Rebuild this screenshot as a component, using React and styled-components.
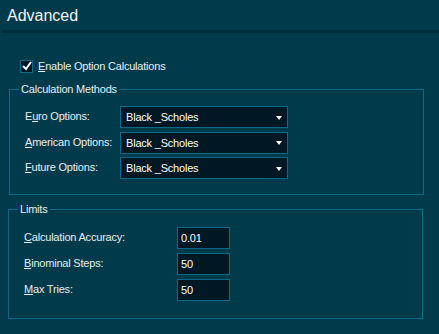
import React from "react";
import styled, { createGlobalStyle } from "styled-components";

const GlobalStyle = createGlobalStyle`
  html, body {
    margin: 0;
    padding: 0;
    background: #003a4b;
  }
  body {
    font-family: "Liberation Sans", Arial, sans-serif;
    font-size: 11px;
    letter-spacing: -0.2px;
    color: #e6f0f2;
  }
`;

const Page = styled.div`
  width: 439px;
  height: 334px;
  background: #003a4b;
  overflow: hidden;
`;

const Header = styled.div`
  margin-left: 2px;
  height: 30px;
  border-bottom: 3px solid #002e3c;
  box-sizing: content-box;
  display: flex;
  align-items: center;
  padding-left: 5px;
`;

const Title = styled.div`
  font-size: 16px;
  line-height: 18px;
  letter-spacing: 0;
  color: #f2f6f7;
  margin-top: 1px;
`;

const CheckRow = styled.label`
  display: flex;
  align-items: center;
  gap: 5px;
  margin: 27px 0 0 20px;
  height: 12px;
  line-height: 13px;
`;

const Box = styled.span`
  width: 11px;
  height: 11px;
  border: 1px solid #0a6a88;
  background: #001823;
  display: flex;
  align-items: center;
  justify-content: center;
`;

const Fieldset = styled.fieldset`
  margin: ${(p) => p.$top}px 0 0 ${(p) => p.$left}px;
  width: 415px;
  box-sizing: border-box;
  border: 1px solid #0a6a88;
  padding: ${(p) => p.$pt}px 14px ${(p) => p.$bottom}px 14px;
  min-width: 0;
`;

const Legend = styled.legend`
  padding: 0 2px;
  margin-left: -5px;
  line-height: 13px;
  color: #e6f0f2;
`;

const Grid = styled.div`
  display: grid;
  grid-template-columns: ${(p) => p.$label}px ${(p) => p.$field}px;
  row-gap: ${(p) => p.$gap}px;
  align-items: center;
`;

const Label = styled.span`
  padding-left: 1px;
  line-height: 13px;
  margin-top: -1px;
`;

const Select = styled.div`
  height: 22px;
  box-sizing: border-box;
  border: 1px solid #0a6a88;
  background: #001823;
  color: #ffffff;
  display: flex;
  align-items: center;
  justify-content: space-between;
  padding: 0 5px 0 5px;
`;

const Arrow = styled.span`
  width: 0;
  height: 0;
  border-left: 3.5px solid transparent;
  border-right: 3.5px solid transparent;
  border-top: 4px solid #ffffff;
  margin-top: 1px;
`;

const Input = styled.div`
  height: 22px;
  box-sizing: border-box;
  border: 1px solid #0a6a88;
  background: #001823;
  color: #ffffff;
  display: flex;
  align-items: center;
  padding: 0 3px;
`;

const U = styled.span`
  text-decoration: underline;
`;

const methods = [
  { pre: "E", key: "u", post: "ro Options:" },
  { pre: "", key: "A", post: "merican Options:" },
  { pre: "", key: "F", post: "uture Options:" },
];

const limits = [
  { key: "C", post: "alculation Accuracy:", value: "0.01" },
  { key: "B", post: "inominal Steps:", value: "50" },
  { key: "M", post: "ax Tries:", value: "50" },
];

export default function App() {
  return (
    <Page>
      <GlobalStyle />
      <Header>
        <Title>Advanced</Title>
      </Header>
      <CheckRow>
        <Box>
          <svg width="10" height="10" viewBox="0 0 10 10">
            <path d="M1 5 L4 8 L9 1" stroke="#fff" strokeWidth="2" fill="none" />
          </svg>
        </Box>
        <span><U>E</U>nable Option Calculations</span>
      </CheckRow>
      <Fieldset $top={11} $left={9} $pt={10} $bottom={15}>
        <Legend>Calculation Methods</Legend>
        <Grid $label={96} $field={168} $gap={3.5}>
          {methods.map((m, i) => (
            <React.Fragment key={i}>
              <Label>{m.pre}<U>{m.key}</U>{m.post}</Label>
              <Select>
                <span>Black _Scholes</span>
                <Arrow />
              </Select>
            </React.Fragment>
          ))}
        </Grid>
      </Fieldset>
      <Fieldset $top={8} $left={8} $pt={11} $bottom={17}>
        <Legend>Limits</Legend>
        <Grid $label={154} $field={53} $gap={4}>
          {limits.map((l, i) => (
            <React.Fragment key={i}>
              <Label><U>{l.key}</U>{l.post}</Label>
              <Input>{l.value}</Input>
            </React.Fragment>
          ))}
        </Grid>
      </Fieldset>
    </Page>
  );
}
